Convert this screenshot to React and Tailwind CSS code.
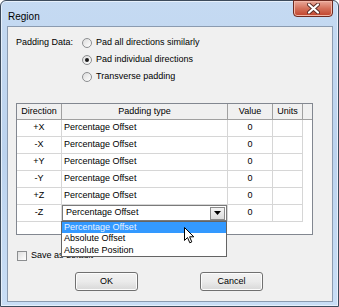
import React from "react";

const rows = [
  { dir: "+X", type: "Percentage Offset", value: "0" },
  { dir: "-X", type: "Percentage Offset", value: "0" },
  { dir: "+Y", type: "Percentage Offset", value: "0" },
  { dir: "-Y", type: "Percentage Offset", value: "0" },
  { dir: "+Z", type: "Percentage Offset", value: "0" },
];

function Radio({ checked, label }) {
  return (
    <div className="flex items-center h-[17px] gap-[4px]">
      <span className="w-[10px] h-[10px] rounded-full border border-[#8c8e90] bg-gradient-to-br from-[#dcdcdc] to-[#ffffff] flex items-center justify-center">
        {checked && <span className="w-[4px] h-[4px] rounded-full bg-[#1b1b1b]" />}
      </span>
      <span>{label}</span>
    </div>
  );
}

function Button({ children }) {
  return (
    <button className="w-[63px] h-[19px] rounded-[3px] border border-[#707070] bg-gradient-to-b from-[#f2f2f2] via-[#ebebeb] to-[#d8d8d8] shadow-[inset_0_0_0_1px_#fcfcfc] text-black">
      {children}
    </button>
  );
}

function Cursor() {
  return (
    <svg width="12" height="18" viewBox="0 0 12 18" className="absolute left-[122px] top-[5px]">
      <path
        d="M0.5 0.5 L0.5 13.5 L3.5 10.5 L5.8 15.8 L7.8 14.9 L5.6 9.8 L9.8 9.8 Z"
        fill="#ffffff"
        stroke="#000000"
        strokeWidth="1"
        strokeLinejoin="miter"
      />
    </svg>
  );
}

export default function App() {
  return (
    <div
      className="w-[339px] h-[307px] relative overflow-hidden text-[9px] text-black"
      style={{ fontFamily: '"Liberation Sans", Arial, sans-serif' }}
    >
      <div className="w-full h-full rounded-t-[6px] border border-[#3d4b5c] bg-gradient-to-b from-[#c5daf2] via-[#bcd3ee] to-[#c9def6] shadow-[inset_0_0_0_1px_#e6f0fb] flex flex-col">
        {/* title bar */}
        <div className="h-[25px] flex justify-between shrink-0">
          <span className="pl-[7px] pt-[8px] text-[10px] text-black">Region</span>
          <div className="mr-[5px] w-[40px] h-[17px] -mt-px rounded-b-[4px] border border-[#6e2a20] bg-gradient-to-b from-[#e9a99a] via-[#d4705a] to-[#c0422a] shadow-[inset_0_0_0_1px_#f2b6a6] flex items-center justify-center">
            <svg width="13" height="11" viewBox="0 0 13 11">
              <path d="M2 1.5 L11 9.5 M11 1.5 L2 9.5" stroke="#5a2a24" strokeWidth="4" strokeLinecap="round" />
              <path d="M2 1.5 L11 9.5 M11 1.5 L2 9.5" stroke="#ffffff" strokeWidth="2.2" strokeLinecap="round" />
            </svg>
          </div>
        </div>

        {/* client area */}
        <div className="ml-[6px] mr-[5px] mb-[4px] flex-1 border border-[#8b9bb0] bg-[#f0f0f0] pl-[8px] pt-[7px] flex flex-col">
          <div className="flex">
            <div className="w-[66px] h-[17px] flex items-center">Padding Data:</div>
            <div className="flex flex-col">
              <Radio label="Pad all directions similarly" />
              <Radio checked label="Pad individual directions" />
              <Radio label="Transverse padding" />
            </div>
          </div>

          {/* grid */}
          <div className="mt-[18px] w-[297px] h-[132px] border border-[#828790] bg-white">
            <div className="flex h-[16px] bg-[#f0f0f0] border-b border-[#a0a0a0]">
              <div className="w-[45px] border-r border-[#a0a0a0] flex items-center justify-center">Direction</div>
              <div className="w-[166px] border-r border-[#a0a0a0] flex items-center justify-center">Padding type</div>
              <div className="w-[45px] border-r border-[#a0a0a0] flex items-center justify-center">Value</div>
              <div className="w-[30px] border-r border-[#a0a0a0] flex items-center justify-center">Units</div>
              <div className="flex-1" />
            </div>
            {rows.map((r) => (
              <div key={r.dir} className="flex h-[17px]">
                <div className="w-[45px] border-r border-b border-[#d6d6d6] flex items-center justify-center">{r.dir}</div>
                <div className="w-[166px] border-r border-b border-[#d6d6d6] flex items-center pl-[2px]">{r.type}</div>
                <div className="w-[45px] border-r border-b border-[#d6d6d6] flex items-center justify-center">{r.value}</div>
                <div className="w-[30px] border-r border-b border-[#d6d6d6]" />
              </div>
            ))}
            <div className="flex h-[17px]">
              <div className="w-[45px] border-r border-b border-[#d6d6d6] flex items-center justify-center">-Z</div>
              <div className="w-[166px] border-r border-b border-[#d6d6d6] relative">
                <div className="h-full border border-[#7a7a7a] bg-white flex items-center justify-between pl-[3px] pr-px">
                  <span>Percentage Offset</span>
                  <span className="w-[15px] h-[13px] border border-[#8a8a8a] bg-gradient-to-b from-[#f4f4f4] to-[#dcdcdc] flex items-center justify-center">
                    <svg width="7" height="4" viewBox="0 0 7 4">
                      <path d="M0 0 L7 0 L3.5 4 Z" fill="#000" />
                    </svg>
                  </span>
                </div>
                <div className="absolute left-[-1px] top-full w-[166px] h-[36px] border border-[#646464] bg-white z-10 flex flex-col">
                  <div className="h-[11px] bg-[#3399ff] text-[#eaf4ff] pl-[2px] flex items-center">Percentage Offset</div>
                  <div className="h-[11.5px] pl-[2px] flex items-center">Absolute Offset</div>
                  <div className="h-[11.5px] pl-[2px] flex items-center">Absolute Position</div>
                  <Cursor />
                </div>
              </div>
              <div className="w-[45px] border-r border-b border-[#d6d6d6] flex items-center justify-center">0</div>
              <div className="w-[30px] border-r border-b border-[#d6d6d6]" />
            </div>
          </div>

          <div className="mt-[13px] h-[16px] flex items-center gap-[4px] pl-px">
            <span className="w-[10px] h-[10px] border border-[#8c8e90] bg-gradient-to-br from-[#dedede] to-[#ffffff]" />
            <span>Save as default</span>
          </div>

          <div className="mt-[8px] flex">
            <div className="ml-[59px]">
              <Button>OK</Button>
            </div>
            <div className="ml-[62px]">
              <Button>Cancel</Button>
            </div>
          </div>
        </div>
      </div>
    </div>
  );
}
